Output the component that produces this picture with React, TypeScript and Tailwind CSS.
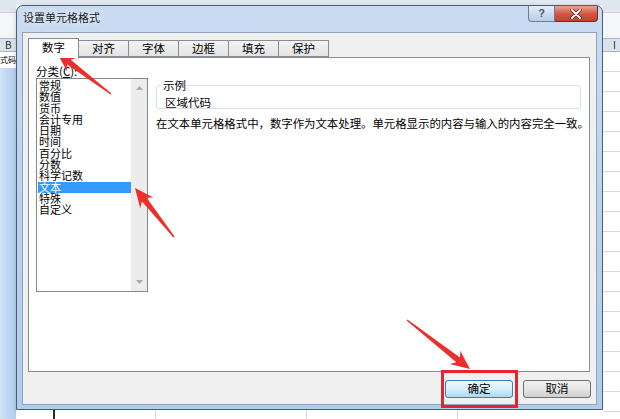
import { Fragment } from 'react';

const cjk = "font-['Noto_Sans_CJK_SC','Microsoft_YaHei',sans-serif]";

const categories = [
  '常规',
  '数值',
  '货币',
  '会计专用',
  '日期',
  '时间',
  '百分比',
  '分数',
  '科学记数',
  '文本',
  '特殊',
  '自定义',
];

const tabs = ['数字', '对齐', '字体', '边框', '填充', '保护'];

// red annotation arrows: [tailX, tailY, tipX, tipY]
const arrows = [
  [111, 94, 57, 53],
  [174, 237, 135, 188],
  [407, 320, 470, 369],
];

const arrowPoints = (x1: number, y1: number, x2: number, y2: number) => {
  const len = Math.hypot(x2 - x1, y2 - y1);
  const ux = (x2 - x1) / len;
  const uy = (y2 - y1) / len;
  const px = -uy;
  const py = ux;
  const headLen = 19;
  const headW = 17;
  const neckW = 6;
  const tailW = 1.5;
  const bx = x2 - ux * headLen;
  const by = y2 - uy * headLen;
  const nx = x2 - ux * (headLen - 4);
  const ny = y2 - uy * (headLen - 4);
  const pts = [
    [x1 + (px * tailW) / 2, y1 + (py * tailW) / 2],
    [nx + (px * neckW) / 2, ny + (py * neckW) / 2],
    [bx + (px * headW) / 2, by + (py * headW) / 2],
    [x2, y2],
    [bx - (px * headW) / 2, by - (py * headW) / 2],
    [nx - (px * neckW) / 2, ny - (py * neckW) / 2],
    [x1 - (px * tailW) / 2, y1 - (py * tailW) / 2],
  ];
  return pts.map((p) => p.join(',')).join(' ');
};

const SheetRows = () => (
  <div className="flex flex-1 flex-col bg-white">
    {Array.from({ length: 18 }).map((_, i) => (
      <div key={i} className="h-[20px] shrink-0 border-b border-[#d4dbe6]" />
    ))}
  </div>
);

const App = () => {
  return (
    <div className={`relative flex h-[419px] w-[620px] overflow-hidden bg-white text-black ${cjk}`}>
      {/* spreadsheet left of the dialog */}
      <div className="flex w-[16px] shrink-0 flex-col">
        <div className="h-[12px] bg-[#dfe6ef]" />
        <div className="h-[26px] border-t border-[#c9d2de] bg-[#f4f6f9]" />
        <div className="flex h-[14px] items-center border-y border-[#9eb6ce] bg-[#dde3ea] pl-[5px] text-[10px] leading-none text-[#333]">
          B
        </div>
        <div className="h-[16px] whitespace-nowrap bg-white pt-[3px] text-[8px] leading-[10px]">
          式码
        </div>
        <div className="flex flex-1 bg-gradient-to-r from-[#d5e4f6] via-[#bfd6f2] to-[#b7d0ef]" />
      </div>

      {/* middle column: dialog */}
      <div className="flex w-[587px] shrink-0 flex-col">
        <div className="h-[5px] bg-[#e3e9f1]" />
        <div className="flex h-[405px] flex-col rounded-t-[7px] border border-[#4b5d73] bg-gradient-to-b from-[#c9dcf2] via-[#b9d2ee] to-[#b0cced] shadow-[2px_3px_6px_rgba(0,0,0,0.35)]">
          {/* title bar */}
          <div className="flex h-[26px] shrink-0 items-start justify-between">
            <div className="pl-[6px] pt-[5px] text-[11px] leading-[12px] text-[#1a1a1a] [text-shadow:0_0_6px_#fff]">
              设置单元格格式
            </div>
            <div className="mr-[4px] flex">
              <div className="flex h-[16px] w-[27px] items-center justify-center rounded-bl-[4px] border border-t-0 border-[#6b7f98] bg-gradient-to-b from-[#e4edf7] to-[#b9cde4] text-[11px] font-bold leading-none text-[#4a5a6e] font-['Liberation_Sans',sans-serif]">
                ?
              </div>
              <div className="flex h-[16px] w-[43px] items-center justify-center rounded-br-[4px] border border-l-0 border-t-0 border-[#6e2a22] bg-gradient-to-b from-[#e9a395] via-[#d35a46] to-[#c2402b]">
                <svg width="12" height="10" viewBox="0 0 12 10">
                  <path d="M2 1 L10 9 M10 1 L2 9" stroke="#5a1a12" strokeWidth="3.4" strokeLinecap="round" />
                  <path d="M2 1 L10 9 M10 1 L2 9" stroke="#ffffff" strokeWidth="2" strokeLinecap="round" />
                </svg>
              </div>
            </div>
          </div>

          {/* client area */}
          <div className="mx-[5px] mb-[4px] flex flex-1 flex-col border border-[#8ea4be] bg-[#f0f0f0] px-[5px] pt-[5px]">
            {/* tabs */}
            <div className="relative z-10 flex h-[19px] items-end">
              {tabs.map((t, i) => (
                <Fragment key={t}>
                  {i === 0 ? (
                    <div className="-mb-px flex h-[20px] w-[51px] items-center justify-center border border-b-0 border-[#898c95] bg-white pb-[1px] text-[11.5px] leading-none">
                      {t}
                    </div>
                  ) : (
                    <div className="flex h-[17px] w-[50px] items-center justify-center border border-l-0 border-[#898c95] bg-gradient-to-b from-[#f3f3f3] to-[#e3e3e3] text-[11.5px] leading-none">
                      {t}
                    </div>
                  )}
                </Fragment>
              ))}
            </div>

            {/* tab panel */}
            <div className="flex h-[315px] w-[562px] border border-[#898c95] bg-white">
              <div className="flex flex-col pl-[7px] pt-[7px]">
                <div className="text-[11.5px] leading-[12px]">
                  分类(<span className="underline">C</span>):
                </div>
                <div className="mt-[1px] flex h-[214px] w-[112px] border border-[#828790]">
                  <div className="flex flex-1 flex-col pl-[1px] pt-[1px]">
                    {categories.map((c) => (
                      <div
                        key={c}
                        className={`h-[11.3px] whitespace-nowrap pl-[1px] text-[11px] leading-[11.3px] ${
                          c === '文本' ? 'bg-[#3399ff] text-white' : ''
                        }`}
                      >
                        {c}
                      </div>
                    ))}
                  </div>
                  <div className="flex w-[16px] flex-col items-center justify-between bg-[#ececec] py-[7px]">
                    <svg width="7" height="4" viewBox="0 0 7 4">
                      <path d="M0 4 L3.5 0 L7 4 Z" fill="#a9a9a9" />
                    </svg>
                    <svg width="7" height="4" viewBox="0 0 7 4">
                      <path d="M0 0 L3.5 4 L7 0 Z" fill="#a9a9a9" />
                    </svg>
                  </div>
                </div>
              </div>

              <div className="ml-[8px] flex flex-col pt-[21px]">
                <fieldset className="w-[425px] rounded-[3px] border border-[#d5dfe5] pb-0 pl-[8px] pt-[5px]">
                  <legend className="ml-[-3px] px-[1px] text-[11.5px] leading-[12px]">示例</legend>
                  <div className="text-[11.5px] leading-[12px]">区域代码</div>
                </fieldset>
                <div className="mt-[8px] whitespace-nowrap text-[11.4px] leading-[12px]">
                  在文本单元格格式中，数字作为文本处理。单元格显示的内容与输入的内容完全一致。
                </div>
              </div>
            </div>

            {/* buttons */}
            <div className="mt-[8px] flex justify-end gap-[10px]">
              <button className="flex h-[18px] w-[68px] items-center justify-center rounded-[3px] border border-[#3c7fb1] bg-gradient-to-b from-[#eaf6fd] via-[#d9f0fc] to-[#a7d9f5] text-[11.5px] leading-none">
                确定
              </button>
              <button className="flex h-[18px] w-[68px] items-center justify-center rounded-[3px] border border-[#707070] bg-gradient-to-b from-[#f2f2f2] via-[#e6e6e6] to-[#cfcfcf] text-[11.5px] leading-none">
                取消
              </button>
            </div>
          </div>
        </div>
        <div className="flex h-[9px] bg-white">
          <div className="ml-[37px] w-[2px] bg-[#2b2b2b]" />
          <div className="ml-[100px] w-px bg-[#d4dbe6]" />
          <div className="ml-[150px] w-px bg-[#d4dbe6]" />
          <div className="ml-[150px] w-px bg-[#d4dbe6]" />
        </div>
      </div>

      {/* spreadsheet right of the dialog */}
      <div className="flex w-[17px] shrink-0 flex-col">
        <div className="h-[12px] bg-[#dfe6ef]" />
        <div className="h-[26px] border-t border-[#c9d2de] bg-[#f4f6f9]" />
        <div className="flex h-[14px] items-center border-y border-[#9eb6ce] bg-[#dde3ea] pl-[10px] text-[10px] leading-none text-[#333]">
          I
        </div>
        <SheetRows />
      </div>

      {/* annotations */}
      <div className="absolute left-[441px] top-[370px] h-[38px] w-[77px] border-[3px] border-[#e5242b]" />
      <svg className="pointer-events-none absolute inset-0" width="620" height="419">
        {arrows.map(([x1, y1, x2, y2], i) => (
          <polygon key={i} points={arrowPoints(x1, y1, x2, y2)} fill="#ec2f2c" />
        ))}
      </svg>
    </div>
  );
};

export default App;
